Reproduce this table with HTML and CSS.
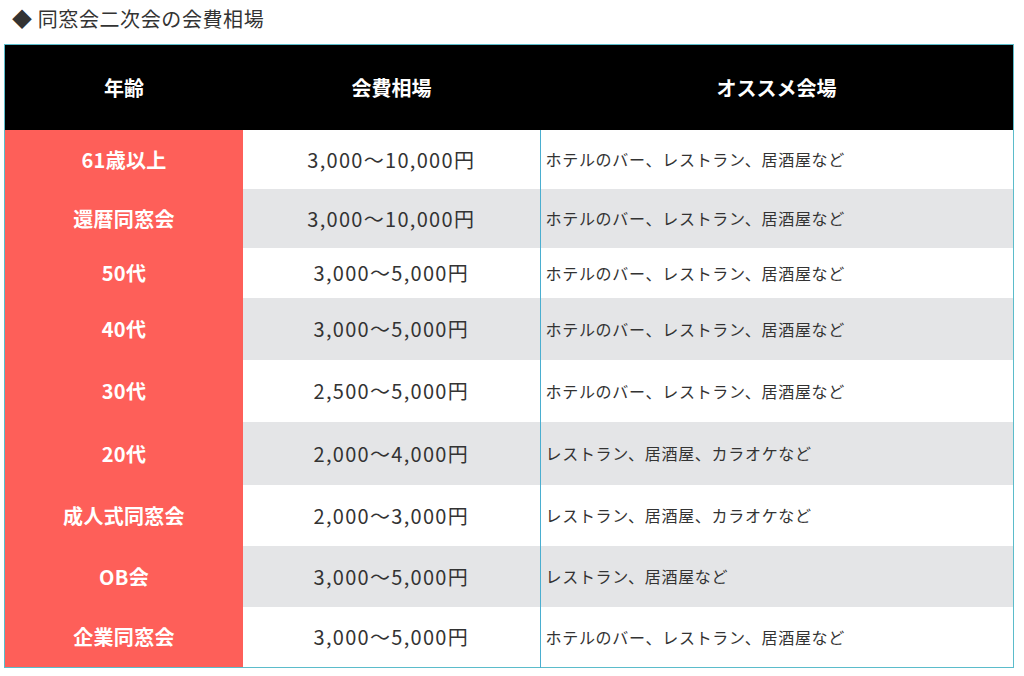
FILE: index.html
```html
<!DOCTYPE html>
<html lang="ja">
<head>
<meta charset="utf-8">
<link rel="stylesheet" href="styles.css">
</head>
<body>
<h2 class="title">◆ 同窓会二次会の会費相場</h2>
<table class="fee-table">
  <thead>
    <tr><th class="c1">年齢</th><th class="c2">会費相場</th><th class="c3">オススメ会場</th></tr>
  </thead>
  <tbody>
    <tr class="r-a odd"><td class="age">61歳以上</td><td class="fee">3,000〜10,000円</td><td class="venue">ホテルのバー、レストラン、居酒屋など</td></tr>
    <tr class="r-a even"><td class="age">還暦同窓会</td><td class="fee">3,000〜10,000円</td><td class="venue">ホテルのバー、レストラン、居酒屋など</td></tr>
    <tr class="r-b odd"><td class="age">50代</td><td class="fee">3,000〜5,000円</td><td class="venue">ホテルのバー、レストラン、居酒屋など</td></tr>
    <tr class="r-c even"><td class="age">40代</td><td class="fee">3,000〜5,000円</td><td class="venue">ホテルのバー、レストラン、居酒屋など</td></tr>
    <tr class="r-c odd"><td class="age">30代</td><td class="fee">2,500〜5,000円</td><td class="venue">ホテルのバー、レストラン、居酒屋など</td></tr>
    <tr class="r-d even"><td class="age">20代</td><td class="fee">2,000〜4,000円</td><td class="venue">レストラン、居酒屋、カラオケなど</td></tr>
    <tr class="r-e odd"><td class="age">成人式同窓会</td><td class="fee">2,000〜3,000円</td><td class="venue">レストラン、居酒屋、カラオケなど</td></tr>
    <tr class="r-e even"><td class="age">OB会</td><td class="fee">3,000〜5,000円</td><td class="venue">レストラン、居酒屋など</td></tr>
    <tr class="r-e odd"><td class="age">企業同窓会</td><td class="fee">3,000〜5,000円</td><td class="venue">ホテルのバー、レストラン、居酒屋など</td></tr>
  </tbody>
</table>
</body>
</html>
```
FILE: styles.css
```css
html, body {
  margin: 0;
  padding: 0;
  background: #ffffff;
}
body {
  font-family: "Noto Sans CJK JP", "Noto Sans", sans-serif;
  color: #333333;
}
.title {
  margin: 0;
  padding: 0 0 0 12px;
  height: 44px;
  line-height: 38px;
  font-size: 20px;
  letter-spacing: 0.6px;
  font-weight: normal;
  color: #333333;
}
.fee-table {
  margin-left: 4px;
  width: 1010px;
  border-collapse: collapse;
  border: 1px solid #5bbccb;
  table-layout: fixed;
}
.fee-table th, .fee-table td {
  padding: 0;
}
.fee-table thead tr {
  height: 85px;
  background: #000000;
}
.fee-table th {
  color: #ffffff;
  font-size: 20px;
  font-weight: bold;
  text-align: center;
}
.c1 { width: 238px; }
.c2 { width: 297px; }
.r-a { height: 59px; }
.r-b { height: 50px; }
.r-c { height: 62px; }
.r-d { height: 63px; }
.r-e { height: 61px; }
.odd { background: #ffffff; }
.even { background: #e4e5e7; }
.age {
  background: #fe5f59;
  color: #ffffff;
  font-weight: bold;
  font-size: 20px;
  letter-spacing: 0.3px;
  text-align: center;
}
.fee {
  text-align: center;
  font-size: 20px;
  letter-spacing: 1.3px;
  color: #333333;
}
.venue {
  border-left: 1px solid #4aaed0;
  padding-left: 5px !important;
  font-size: 16px;
  letter-spacing: 0.7px;
  color: #333333;
}
```
